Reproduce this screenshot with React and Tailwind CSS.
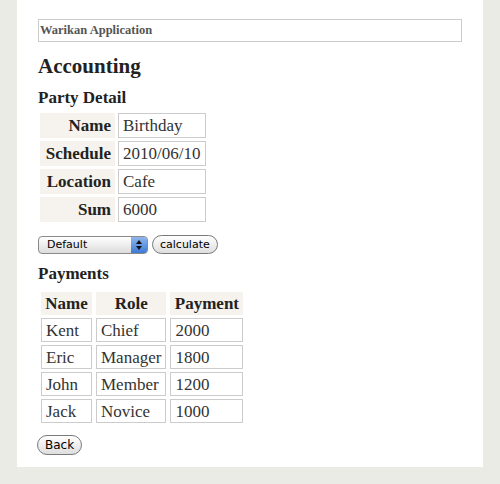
import React from "react";

const party = [
  ["Name", "Birthday"],
  ["Schedule", "2010/06/10"],
  ["Location", "Cafe"],
  ["Sum", "6000"],
];

const payments = [
  ["Kent", "Chief", "2000"],
  ["Eric", "Manager", "1800"],
  ["John", "Member", "1200"],
  ["Jack", "Novice", "1000"],
];

const serif = { fontFamily: '"Liberation Serif", "Times New Roman", serif' };
const ui = { fontFamily: '"DejaVu Sans", sans-serif' };

const App = () => {
  return (
    <div className="min-h-[484px] w-[500px] bg-[#ebebe6]" style={serif}>
      <div className="ml-[17px] w-[466px] h-[467px] bg-white pt-[19px] px-[21px] text-[#333]">
        {/* Header */}
        <div className="h-[23px] w-[424px] border border-[#ccc] px-[1px] flex items-center text-[12.5px] font-bold text-[#555]">
          Warikan Application
        </div>

        <h1 className="mt-[11px] text-[21px] leading-[26px] font-bold text-[#222]">Accounting</h1>
        <h2 className="mt-[9px] text-[17px] leading-[20px] font-bold text-[#222]">Party Detail</h2>

        {/* Party Detail */}
        <table className="mt-[2px] -ml-[1px] border-separate border-spacing-[3px] text-[17px] leading-[19px]">
          <tbody>
            {party.map(([k, v]) => (
              <tr key={k}>
                <th className="w-[75px] h-[25px] bg-[#f6f3ee] text-right font-bold pr-[4px] text-[#222]">{k}</th>
                <td className="w-[88px] h-[25px] border border-[#ccc] px-[4px] text-[#333]">{v}</td>
              </tr>
            ))}
          </tbody>
        </table>

        {/* Controls */}
        <div className="mt-[10px] flex items-center gap-[4px]" style={ui}>
          <div className="relative w-[110px] h-[18px] rounded-[4px] border border-[#8a8a8a] bg-gradient-to-b from-white to-[#dcdcdc] text-[11px] leading-[16px] pl-[8px] text-black">
            Default
            <div className="absolute right-0 top-0 bottom-0 w-[16px] rounded-r-[3px] bg-gradient-to-b from-[#8fb6ec] to-[#3c7ad6] flex flex-col items-center justify-center gap-[2px]">
              <svg width="6" height="4" viewBox="0 0 6 4"><path d="M0 4 L3 0 L6 4 Z" fill="#111" /></svg>
              <svg width="6" height="4" viewBox="0 0 6 4"><path d="M0 0 L3 4 L6 0 Z" fill="#111" /></svg>
            </div>
          </div>
          <button className="h-[19px] px-[7px] rounded-full border border-[#7a7a7a] bg-gradient-to-b from-white to-[#dedede] text-[11px] leading-[14px] text-black">
            calculate
          </button>
        </div>

        <h2 className="mt-[10px] text-[17px] leading-[20px] font-bold text-[#222]">Payments</h2>

        {/* Payments */}
        <table className="mt-[5px] border-separate border-spacing-x-[4px] border-spacing-y-[3px] -ml-[1px] text-[17px] leading-[19px]">
          <thead>
            <tr>
              <th className="w-[51px] h-[23px] bg-[#f6f3ee] font-bold text-center text-[#222]">Name</th>
              <th className="w-[70px] h-[23px] bg-[#f6f3ee] font-bold text-center text-[#222]">Role</th>
              <th className="w-[73px] h-[23px] bg-[#f6f3ee] font-bold text-center text-[#222]">Payment</th>
            </tr>
          </thead>
          <tbody>
            {payments.map(([n, r, p]) => (
              <tr key={n}>
                <td className="h-[24px] border border-[#ccc] px-[4px]">{n}</td>
                <td className="h-[24px] border border-[#ccc] px-[4px]">{r}</td>
                <td className="h-[24px] border border-[#ccc] px-[4px]">{p}</td>
              </tr>
            ))}
          </tbody>
        </table>

        <button
          className="mt-[9px] -ml-[1px] h-[20px] px-[7px] rounded-full border border-[#7a7a7a] bg-gradient-to-b from-white to-[#dedede] text-[12px] leading-[16px] text-black"
          style={ui}
        >
          Back
        </button>
      </div>
    </div>
  );
};

export default App;
